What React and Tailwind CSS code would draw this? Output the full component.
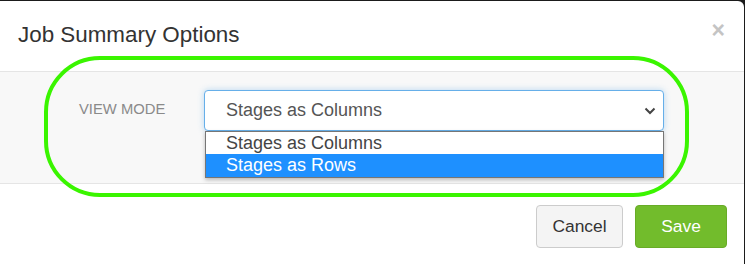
import { useState } from 'react';

const options = ['Stages as Columns', 'Stages as Rows'];

const App = () => {
  const [selected] = useState(1);

  return (
    <div className="w-[745px] h-[264px] bg-[#1b1b1b] overflow-hidden" style={{ fontFamily: '"Liberation Sans", Arial, sans-serif' }}>
      <div className="relative mt-[1px] w-[744px] h-[263px] bg-white rounded-tr-[6px] flex flex-col">
        {/* Header */}
        <div className="h-[71px] flex items-center justify-between pl-[18px] pr-[19px] border-b border-[#e5e5e5]">
          <h4 className="text-[22.4px] text-[#333] leading-none -mt-[2px]">Job Summary Options</h4>
          <button className="text-[23px] font-bold text-[#c4c4c4] leading-none -mt-[12px]">×</button>
        </div>

        {/* Body */}
        <div className="h-[112px] bg-[#f8f8f8] border-b border-[#e5e5e5] flex items-start pt-[18px]">
          <label className="w-[204px] pl-[79px] pt-[12px] text-[14.8px] text-[#8a8a8a] leading-none">VIEW MODE</label>
          <div className="w-[460px]">
            <div className="h-[41px] flex items-center justify-between pl-[21px] pr-[7px] bg-white border border-[#66afe9] rounded-[4px] shadow-[0_0_6px_rgba(102,175,233,0.45)] text-[18px] text-[#555]">
              <span>Stages as Columns</span>
              <svg width="12" height="8" viewBox="0 0 12 8" fill="none" stroke="#444" strokeWidth="2">
                <path d="M1.5 1.5 6 6l4.5-4.5" />
              </svg>
            </div>
            <div className="ml-[1px] bg-white border border-[#767676] shadow-[0_2px_4px_rgba(0,0,0,0.25)]">
              {options.map((opt, i) => (
                <div
                  key={opt}
                  className={i === selected
                    ? 'h-[23px] pl-[20px] flex items-center text-[18px] bg-[#1e90ff] text-white'
                    : 'h-[22px] pl-[20px] flex items-center text-[18px] text-[#444]'}
                >
                  {opt}
                </div>
              ))}
            </div>
          </div>
        </div>

        {/* Footer */}
        <div className="flex-1 flex items-start justify-end gap-[12px] pt-[21px] pr-[17px]">
          <button className="w-[87px] h-[43px] bg-[#f4f4f4] border border-[#ccc] rounded-[4px] text-[17.4px] text-[#333]">Cancel</button>
          <button className="w-[92px] h-[43px] bg-[#72bc2c] border border-[#68ab27] rounded-[4px] text-[17.4px] text-white">Save</button>
        </div>

        {/* annotation outline */}
        <div className="absolute left-[44px] top-[55px] w-[645px] h-[141px] border-[4px] border-[#3af500] rounded-[56px] pointer-events-none" />
      </div>
    </div>
  );
};

export default App;
